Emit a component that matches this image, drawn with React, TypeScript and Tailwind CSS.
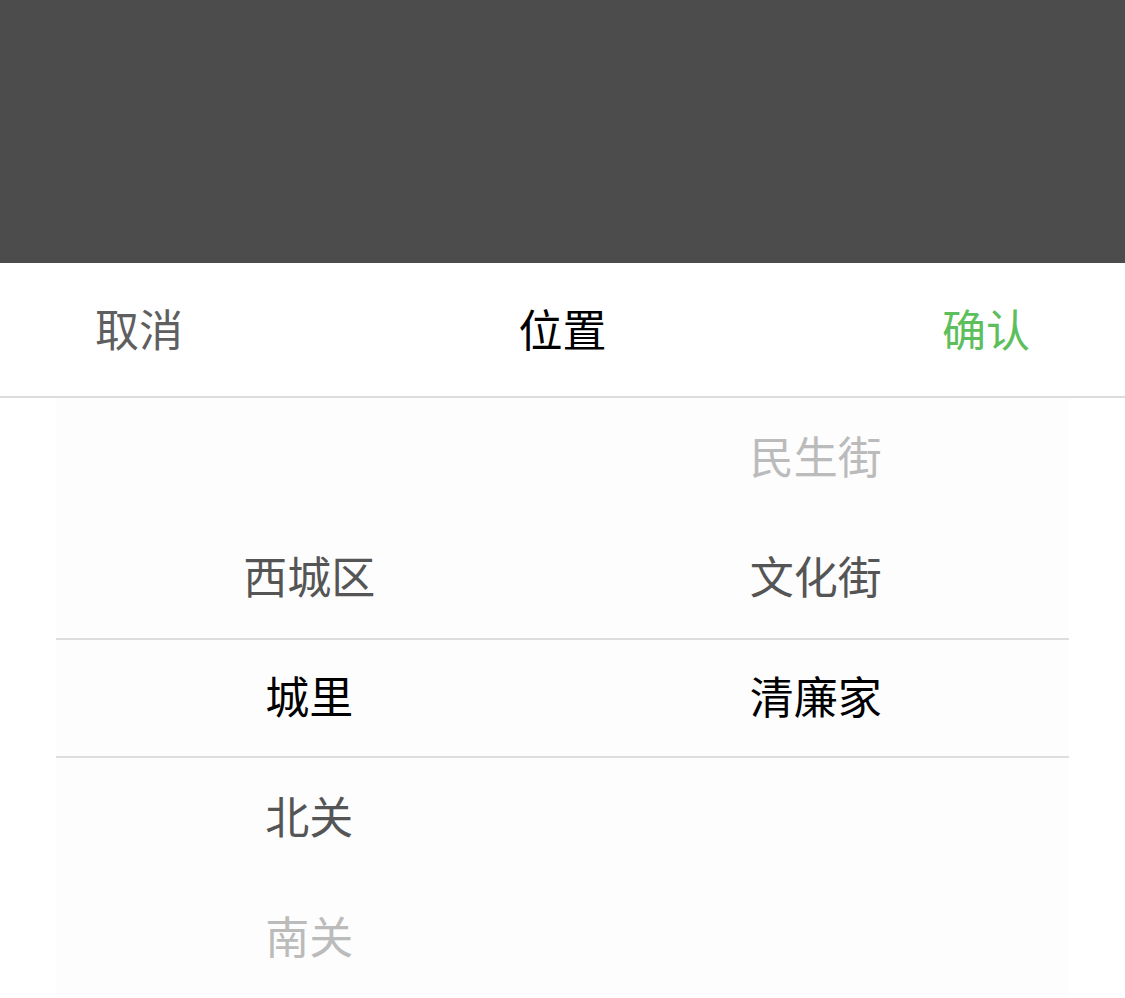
import React from "react";

const left = [
  { label: "", tone: "far" },
  { label: "西城区", tone: "near" },
  { label: "城里", tone: "active" },
  { label: "北关", tone: "near" },
  { label: "南关", tone: "far" },
];

const right = [
  { label: "民生街", tone: "far" },
  { label: "文化街", tone: "near" },
  { label: "清廉家", tone: "active" },
  { label: "", tone: "near" },
  { label: "", tone: "far" },
];

const toneClass: Record<string, string> = {
  active: "text-[#000000]",
  near: "text-[#555555]",
  far: "text-[#bbbbbb]",
};

function Column({ items }: { items: { label: string; tone: string }[] }) {
  return (
    <div className="flex-1 flex flex-col">
      {items.map((item, i) => (
        <div
          key={i}
          className={`h-[120px] pb-[7px] flex items-center justify-center text-[44px] leading-none ${toneClass[item.tone]}`}
        >
          {item.label}
        </div>
      ))}
    </div>
  );
}

export default function App() {
  return (
    <div
      className="w-full h-[998px] flex flex-col bg-white overflow-hidden"
      style={{ fontFamily: '"Noto Sans CJK SC", "Noto Sans", sans-serif' }}
    >
      {/* dimmed backdrop */}
      <div className="h-[263px] bg-[#4c4c4c]" />

      {/* sheet header */}
      <div className="h-[135px] pb-[4px] flex items-center justify-between px-[95px] border-b-2 border-[#dcdcdc] text-[44px] leading-none">
        <span className="text-[#5f5f5f]">取消</span>
        <span className="text-black">位置</span>
        <span className="text-[#5cbf5c]">确认</span>
      </div>

      {/* picker */}
      <div className="flex-1 px-[56px]">
        <div className="relative h-full bg-[#fdfdfd] flex">
          <Column items={left} />
          <Column items={right} />
          <div className="absolute left-0 right-0 top-[240px] h-[120px] border-y-2 border-[#dedede]" />
        </div>
      </div>
    </div>
  );
}
